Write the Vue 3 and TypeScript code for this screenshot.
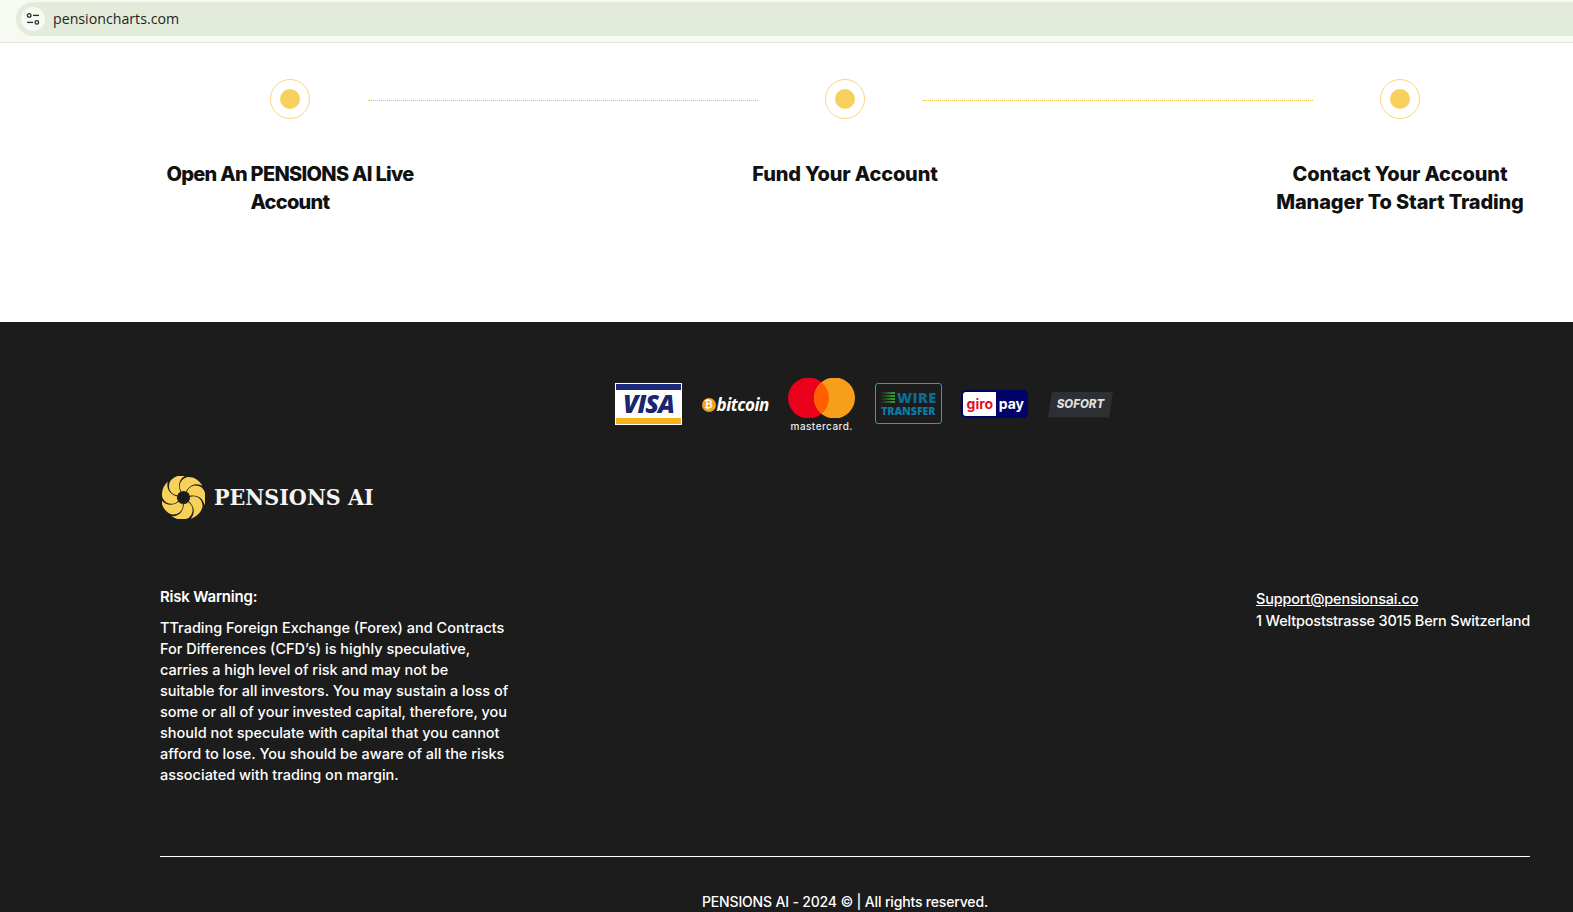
<script setup lang="ts">
const steps: string[][] = [
  ['Open An PENSIONS AI Live', 'Account'],
  ['Fund Your Account'],
  ['Contact Your Account', 'Manager To Start Trading'],
]
const petals: number[] = [0, 51.4, 102.9, 154.3, 205.7, 257.1, 308.6]
const riskLines: string[] = [
  'TTrading Foreign Exchange (Forex) and Contracts',
  'For Differences (CFD’s) is highly speculative,',
  'carries a high level of risk and may not be',
  'suitable for all investors. You may sustain a loss of',
  'some or all of your invested capital, therefore, you',
  'should not speculate with capital that you cannot',
  'afford to lose. You should be aware of all the risks',
  'associated with trading on margin.',
]
</script>

<template>
  <div class="page">
    <header class="chrome">
      <div class="omnibox">
        <span class="tune">
          <svg width="14" height="14" viewBox="0 0 14 14" fill="none" stroke="#2a2f2a" stroke-width="1.3">
            <circle cx="3.2" cy="3.4" r="1.8" />
            <path d="M7 3.4h6" />
            <path d="M1 10.4h6" />
            <circle cx="10.8" cy="10.4" r="1.8" />
          </svg>
        </span>
        <span class="url">pensioncharts.com</span>
      </div>
    </header>

    <section class="steps">
      <div v-for="(step, i) in steps" :key="i" class="step">
        <div class="track">
          <span class="dot"><i></i></span>
          <span v-if="i < 2" class="line"></span>
        </div>
        <h3 :class="{ tight: i === 0 }">
          <template v-for="(l, j) in step" :key="j">{{ l }}<br /></template>
        </h3>
      </div>
    </section>

    <footer class="footer">
      <div class="pay">
        <div class="visa"><b>VISA</b></div>
        <div class="btc"><span class="coin">₿</span><em>bitcoin</em></div>
        <div class="mc">
          <svg width="67" height="40" viewBox="0 0 67 40">
            <circle cx="20.5" cy="20" r="20.5" fill="#eb001b" />
            <circle cx="46.5" cy="20" r="20.5" fill="#f79e1b" />
            <path d="M33.5 4.2a20.5 20.5 0 0 1 0 31.6a20.5 20.5 0 0 1 0-31.6z" fill="#ff5f00" />
          </svg>
          <span>mastercard.</span>
        </div>
        <div class="wire">
          <div class="wire-top">
            <span class="bars"><i></i><i></i><i></i><i></i></span>
            <b>WIRE</b>
          </div>
          <b class="transfer">TRANSFER</b>
        </div>
        <div class="giro"><span class="g">giro</span><span class="p">pay</span></div>
        <div class="sofort"><b>SOFORT</b></div>
      </div>

      <div class="brand">
        <svg width="43" height="43" viewBox="-22 -22 44 44">
          <path
            v-for="a in petals"
            :key="a"
            :transform="`rotate(${a})`"
            d="M-2 -6C-6 -12 -3 -19 4 -21C10 -21.5 16 -18 19.5 -12C13 -15.5 6 -13 2.5 -6C1 -7 -1 -7 -2 -6Z"
            fill="#f8d15a"
          />
        </svg>
        <span>PENSIONS AI</span>
      </div>

      <div class="info">
        <div class="risk">
          <h4>Risk Warning:</h4>
          <p><template v-for="l in riskLines" :key="l">{{ l }}<br /></template></p>
        </div>
        <div class="contact">
          <a>Support@pensionsai.co</a><br />
          1 Weltpoststrasse 3015 Bern Switzerland
        </div>
      </div>

      <hr />
      <p class="copy">PENSIONS AI - 2024 © | All rights reserved.</p>
    </footer>
  </div>
</template>

<style>
html, body { margin: 0; overflow: hidden; background: #fff; }
</style>

<style scoped>
.page {
  height: 912px;
  overflow: hidden;
  font-family: Inter, "Liberation Sans", sans-serif;
  color: #fff;
  display: flex;
  flex-direction: column;
}
.chrome {
  height: 40px;
  flex: none;
  background: #f7faf3;
  border-bottom: 1px solid #e2e4da;
  padding: 2px 0 0 16px;
  box-sizing: content-box;
}
.omnibox {
  height: 34px;
  background: #e3ecdb;
  border-radius: 17px 0 0 17px;
  display: flex;
  align-items: center;
  padding-left: 5px;
  gap: 8px;
}
.tune {
  width: 24px;
  height: 24px;
  border-radius: 50%;
  background: #f7faf3;
  display: flex;
  align-items: center;
  justify-content: center;
}
.url {
  font: 14.2px "Open Sans", sans-serif;
  color: #1f1f1f;
  margin-top: -1px;
}
.steps {
  height: 279px;
  flex: none;
  box-sizing: border-box;
  padding: 36px 43px 0 160px;
  display: flex;
  justify-content: space-between;
  background: #fff;
  color: #111;
}
.step { width: 260px; text-align: center; }
.track { position: relative; height: 40px; display: flex; justify-content: center; }
.dot {
  width: 40px;
  height: 40px;
  box-sizing: border-box;
  border: 1.5px solid #f8d77c;
  border-radius: 50%;
  display: flex;
  align-items: center;
  justify-content: center;
}
.dot i { width: 20px; height: 20px; border-radius: 50%; background: #f7d15c; }
.line {
  position: absolute;
  left: 208px;
  top: 21px;
  width: 390px;
  border-top: 1px dotted #e9c03f;
}
h3 {
  margin: 41px -10px 0;
  font-size: 20px;
  line-height: 28px;
  font-weight: 800;
  letter-spacing: -0.15px;
  white-space: nowrap;
}
h3.tight { letter-spacing: -0.7px; }
.footer {
  flex: 1;
  background: #1c1c1c;
  padding: 54px 43px 0 160px;
  font-size: 14.5px;
  font-weight: 500;
}
.pay {
  display: flex;
  align-items: center;
  gap: 19.6px;
  height: 56px;
  padding-left: 455px;
}
.pay > div { width: 67px; flex: none; box-sizing: border-box; }
.visa {
  height: 42px;
  margin-top: -1px;
  background: #fff;
  border: solid #fff;
  border-width: 1px;
  border-top: 7px solid #1b2a7a;
  border-bottom: 7px solid #f5b31a;
  outline: 1px solid #fff;
  outline-offset: -1px;
  display: flex;
  align-items: center;
  justify-content: center;
}
.visa b {
  font: italic 800 25px/1 "Open Sans", sans-serif;
  color: #1a2670;
  letter-spacing: -1px;
}
.btc { display: flex; align-items: center; gap: 1px; margin-top: 1px; }
.coin {
  width: 14px;
  height: 14px;
  flex: none;
  border-radius: 50%;
  background: #f7a01c;
  color: #fff;
  font: 700 10px/14px "DejaVu Sans", sans-serif;
  text-align: center;
}
.btc em {
  font: italic 700 17px/1 "Open Sans", sans-serif;
  letter-spacing: -0.5px;
  color: #fff;
}
.mc { display: flex; flex-direction: column; align-items: center; margin-top: 2px; }
.mc span {
  font: 500 10px/12px Inter, sans-serif;
  letter-spacing: 0.45px;
  color: #e8e8e8;
  margin-top: 2px;
}
.wire {
  height: 41px;
  margin-top: -1px;
  border: 1px solid #0aa6dc;
  border-radius: 3px;
  display: flex;
  flex-direction: column;
  align-items: center;
  justify-content: center;
  color: #0c7ba6;
}
.wire-top { display: flex; align-items: center; gap: 2px; height: 14px; }
.wire-top b { font: 800 14.5px/14px "Open Sans", sans-serif; color: #0c6c93; letter-spacing: 0.4px; }
.bars { display: flex; flex-direction: column; gap: 1px; }
.bars i { display: block; width: 15px; height: 2px; background: linear-gradient(90deg, #1c1c1c, #34a82c); }
.transfer { font: 800 10.5px/12px "Open Sans", sans-serif; }
.giro {
  height: 28px;
  margin-top: -1px;
  background: #00026a;
  border-radius: 5px;
  padding: 2px;
  display: flex;
  align-items: stretch;
  font: 700 14px/24px Inter, sans-serif;
}
.g { width: 33px; background: #fff; color: #e8101e; text-align: center; border-radius: 3px 0 0 3px; }
.p { flex: 1; color: #fff; text-align: center; }
.pay > .sofort {
  width: 65px;
  height: 26px;
  margin-top: 1px;
  background: #2c2f33;
  clip-path: polygon(4px 0, 100% 0, calc(100% - 4px) 100%, 0 100%);
  display: flex;
  align-items: center;
  justify-content: center;
}
.sofort b { font: italic 800 11.5px/1 Inter, sans-serif; color: #dfdfdf; }
.brand {
  display: flex;
  align-items: center;
  gap: 9px;
  margin-top: 43px;
  padding-left: 2px;
  height: 44px;
}
.brand span {
  font-family: "DejaVu Serif Condensed", "DejaVu Serif", serif;
  font-stretch: condensed;
  font-weight: 700;
  font-size: 23px;
  line-height: 1;
  color: #f4f4f4;
  margin-top: -2px;
}
.info {
  display: flex;
  justify-content: space-between;
  margin-top: 67px;
}
h4 { margin: 0 0 10px; font-size: 15px; line-height: 21px; font-weight: 600; letter-spacing: -0.2px; }
.risk p { margin: 0; line-height: 21px; white-space: nowrap; }
.contact { line-height: 22px; padding-top: 2px; white-space: nowrap; letter-spacing: -0.19px; }
.contact a { text-decoration: underline; }
hr {
  border: 0;
  border-top: 1px solid #fff;
  margin: 71px 0 0;
}
.copy { margin: 34px 0 0; text-align: center; line-height: 22px; font-size: 14px; letter-spacing: -0.17px; }
</style>
